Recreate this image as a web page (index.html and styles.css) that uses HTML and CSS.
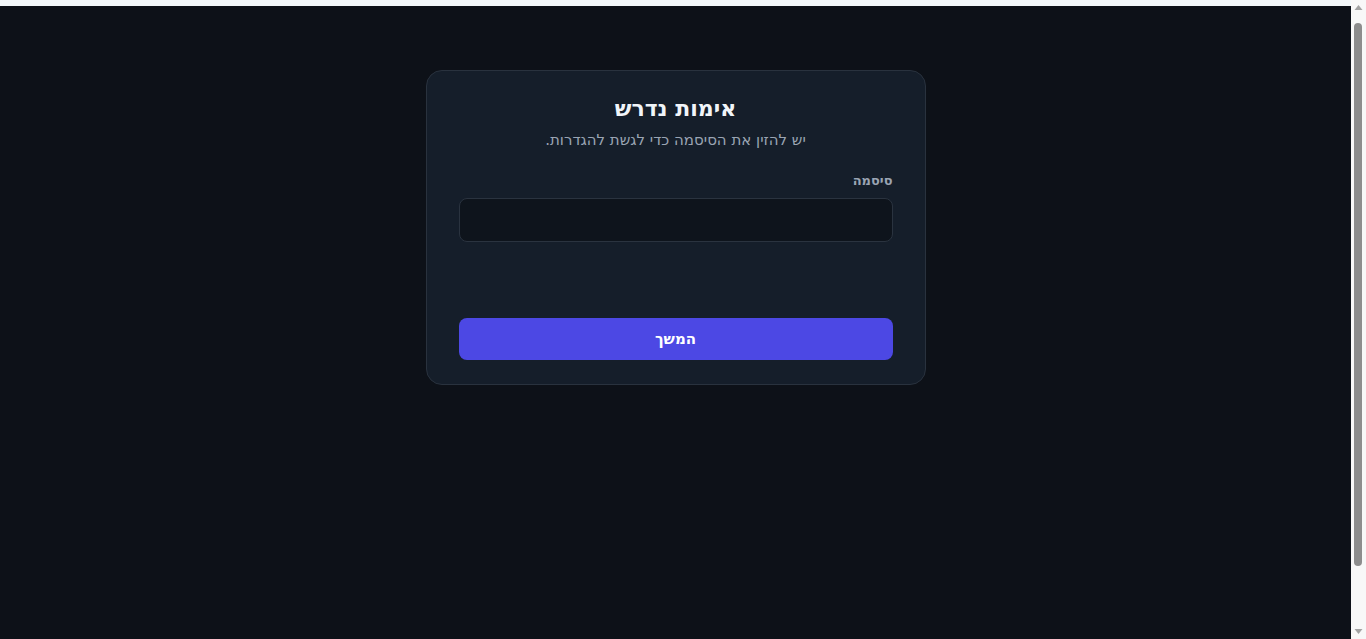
FILE: index.html
```html
<!DOCTYPE html>
<html lang="he" dir="rtl">
<head>
<meta charset="utf-8">
<title>אימות נדרש</title>
<link rel="stylesheet" href="styles.css">
</head>
<body>
<div class="shell">
  <main class="main">
    <div class="page">
      <form class="card">
        <h1 class="title">אימות נדרש</h1>
        <p class="subtitle">יש להזין את הסיסמה כדי לגשת להגדרות.</p>
        <label class="label" for="pw">סיסמה</label>
        <input class="input" id="pw" type="password">
        <div class="error"></div>
        <button class="btn" type="button">המשך</button>
      </form>
    </div>
  </main>
  <div class="scrollbar" aria-hidden="true">
    <svg class="arrow" width="15" height="15" viewBox="0 0 15 15"><path d="M3.5 10 L7.5 5 L11.5 10 Z" fill="#a3a3a3"/></svg>
    <div class="track"><div class="thumb"></div></div>
    <svg class="arrow" width="15" height="15" viewBox="0 0 15 15"><path d="M3.5 5 L7.5 10 L11.5 5 Z" fill="#a3a3a3"/></svg>
  </div>
</div>
</body>
</html>
```
FILE: styles.css
```css
html, body {
  margin: 0;
  padding: 0;
  height: 100%;
  overflow: hidden;
}
body {
  font-family: "DejaVu Sans", "Liberation Sans", sans-serif;
}
.shell {
  direction: ltr;
  display: flex;
  height: 100vh;
}
.main {
  flex: 1;
  background: #f3f7fa;
  overflow: hidden;
}
.scrollbar {
  width: 15px;
  background: #f8f8f8;
  display: flex;
  flex-direction: column;
}
.arrow {
  display: block;
  flex: none;
}
.track {
  flex: 1;
  padding: 8px 4px 58px 3px;
  display: flex;
}
.thumb {
  flex: 1;
  background: #8d8d8d;
  border-radius: 4px;
}
.page {
  direction: rtl;
  margin-top: 6px;
  min-height: 100vh;
  padding-top: 64px;
  background: #0d1118;
  display: flex;
  justify-content: center;
  align-items: flex-start;
}
.card {
  box-sizing: border-box;
  width: 500px;
  background: #151e2a;
  border: 1px solid #29323e;
  border-radius: 16px;
  padding: 24px 32px 24px;
  display: flex;
  flex-direction: column;
}
.title {
  margin: 0;
  font-size: 22px;
  line-height: 28px;
  font-weight: 700;
  color: #f1f5f9;
  text-align: center;
}
.subtitle {
  margin: 6px 0 0;
  font-size: 15px;
  line-height: 22px;
  color: #9aa4b3;
  text-align: center;
}
.label {
  margin-top: 21px;
  font-size: 13px;
  line-height: 18px;
  font-weight: 700;
  color: #9aa4b3;
}
.input {
  box-sizing: border-box;
  margin-top: 8px;
  height: 44px;
  width: 100%;
  background: #0e141c;
  border: 1px solid #2a333f;
  border-radius: 8px;
  color: #f1f5f9;
  font-size: 15px;
  padding: 0 12px;
  outline: none;
}
.error {
  height: 76px;
}
.btn {
  height: 42px;
  width: 100%;
  border: none;
  border-radius: 8px;
  background: #4c48e4;
  color: #ffffff;
  font-family: inherit;
  font-size: 15px;
  font-weight: 700;
  cursor: pointer;
}
```
